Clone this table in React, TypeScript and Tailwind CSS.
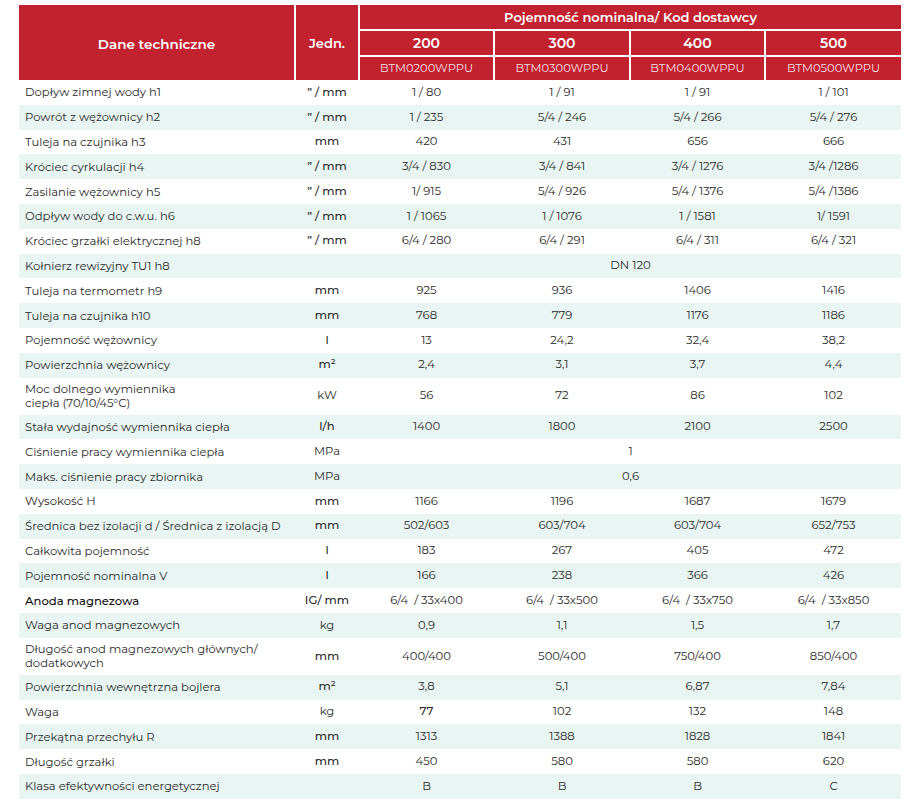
type Row = {
  label: React.ReactNode
  unit: string
  unitBold?: boolean
  values: string[]
  span?: boolean
  tall?: boolean
  labelBold?: boolean
  boldValue?: number
}

const Q = "\u201D / mm"

const rows: Row[] = [
  { label: "Dopływ zimnej wody h1", unit: Q, unitBold: true, values: ["1 / 80", "1 / 91", "1 / 91", "1 / 101"] },
  { label: "Powrót z wężownicy h2", unit: Q, unitBold: true, values: ["1 / 235", "5/4 / 246", "5/4 / 266", "5/4 / 276"] },
  { label: "Tuleja na czujnika h3", unit: "mm", unitBold: true, values: ["420", "431", "656", "666"] },
  { label: "Króciec cyrkulacji h4", unit: Q, unitBold: true, values: ["3/4 / 830", "3/4 / 841", "3/4 / 1276", "3/4 /1286"] },
  { label: "Zasilanie wężownicy h5", unit: Q, unitBold: true, values: ["1/ 915", "5/4 / 926", "5/4 / 1376", "5/4 /1386"] },
  { label: "Odpływ wody do c.w.u. h6", unit: Q, unitBold: true, values: ["1 / 1065", "1 / 1076", "1 / 1581", "1/ 1591"] },
  { label: "Króciec grzałki elektrycznej  h8", unit: Q, unitBold: true, values: ["6/4 / 280", "6/4 / 291", "6/4 / 311", "6/4 / 321"] },
  { label: "Kołnierz rewizyjny TU1 h8", unit: "", values: ["DN 120"], span: true },
  { label: "Tuleja na termometr h9", unit: "mm", unitBold: true, values: ["925", "936", "1406", "1416"] },
  { label: "Tuleja na czujnika h10", unit: "mm", unitBold: true, values: ["768", "779", "1176", "1186"] },
  { label: "Pojemność wężownicy", unit: "l", unitBold: true, values: ["13", "24,2", "32,4", "38,2"] },
  { label: "Powierzchnia wężownicy", unit: "m²", unitBold: true, values: ["2,4", "3,1", "3,7", "4,4"] },
  {
    label: (
      <>
        Moc dolnego wymiennika
        <br />
        ciepła (70/10/45°C)
      </>
    ),
    unit: "kW",
    values: ["56", "72", "86", "102"],
    tall: true,
  },
  { label: "Stała wydajność wymiennika ciepła", unit: "l/h", unitBold: true, values: ["1400", "1800", "2100", "2500"] },
  { label: "Ciśnienie pracy wymiennika ciepła", unit: "MPa", values: ["1"], span: true },
  { label: "Maks. ciśnienie pracy zbiornika", unit: "MPa", values: ["0,6"], span: true },
  { label: "Wysokość H", unit: "mm", unitBold: true, values: ["1166", "1196", "1687", "1679"] },
  { label: "Średnica bez izolacji d / Średnica z izolacją D", unit: "mm", unitBold: true, values: ["502/603", "603/704", "603/704", "652/753"] },
  { label: "Całkowita pojemność", unit: "l", unitBold: true, values: ["183", "267", "405", "472"] },
  { label: "Pojemność nominalna V", unit: "l", unitBold: true, values: ["166", "238", "366", "426"] },
  { label: "Anoda magnezowa", labelBold: true, unit: "IG/ mm", unitBold: true, values: ["6/4  / 33x400", "6/4  / 33x500", "6/4  / 33x750", "6/4  / 33x850"] },
  { label: "Waga anod magnezowych", unit: "kg", values: ["0,9", "1,1", "1,5", "1,7"] },
  {
    label: (
      <>
        Długość anod magnezowych głównych/
        <br />
        dodatkowych
      </>
    ),
    unit: "mm",
    unitBold: true,
    values: ["400/400", "500/400", "750/400", "850/400"],
    tall: true,
  },
  { label: "Powierzchnia wewnętrzna bojlera", unit: "m²", unitBold: true, values: ["3,8", "5,1", "6,87", "7,84"] },
  { label: "Waga", unit: "kg", values: ["77", "102", "132", "148"], boldValue: 0 },
  { label: "Przekątna przechyłu R", unit: "mm", unitBold: true, values: ["1313", "1388", "1828", "1841"] },
  { label: "Długość grzałki", unit: "mm", unitBold: true, values: ["450", "580", "580", "620"] },
  { label: "Klasa efektywności energetycznej", unit: "", values: ["B", "B", "B", "C"] },
]

const cols = "grid grid-cols-[275px_62px_133px_134px_133px_135px] gap-x-[2px]"

export default function App() {
  return (
    <div className="min-h-screen bg-white pt-[5px] pl-[19px] font-['Montserrat','Inter','Open_Sans',sans-serif] text-[#2a2a2a]">
      <div className="w-[882px]">
        {/* Header */}
        <div className={`${cols} grid-rows-[24px_24px_23px] gap-y-[2px] text-white`}>
          <div className="row-span-3 flex items-center justify-center bg-[#c2212f] pt-[3px] text-[13.5px] font-semibold">
            Dane techniczne
          </div>
          <div className="row-span-3 flex items-center justify-center bg-[#c2212f] pt-[3px] text-[13px] font-semibold">
            Jedn.
          </div>
          <div className="col-span-4 flex items-center justify-center bg-[#c2212f] pt-[1px] text-[13px] font-semibold">
            Pojemność nominalna/ Kod dostawcy
          </div>
          {["200", "300", "400", "500"].map((v) => (
            <div key={v} className="flex items-center justify-center bg-[#c2212f] pt-[1px] text-[14px] font-semibold">
              {v}
            </div>
          ))}
          {["BTM0200WPPU", "BTM0300WPPU", "BTM0400WPPU", "BTM0500WPPU"].map((v) => (
            <div key={v} className="flex items-center justify-center bg-[#c2212f] pt-[1px] text-[11.5px] text-[#f6dfe1]">
              {v}
            </div>
          ))}
        </div>

        {/* Body */}
        <div className="text-[11.6px]">
          {rows.map((row, i) => (
            <div
              key={i}
              className={`${cols} items-center ${row.tall ? "h-[37px]" : "h-[24.8px]"} ${
                i % 2 === 1 ? "bg-[#e9f5f2]" : "bg-white"
              }`}
            >
              <div className={`pl-[6px] leading-[14px] ${row.labelBold ? "font-medium text-[#111]" : ""}`}>
                {row.label}
              </div>
              <div className={`text-center ${row.unitBold ? "font-medium" : ""}`}>{row.unit}</div>
              {row.span ? (
                <div className="col-span-4 text-center">{row.values[0]}</div>
              ) : (
                row.values.map((v, j) => (
                  <div key={j} className={`text-center whitespace-pre ${row.boldValue === j ? "font-medium" : ""}`}>
                    {v}
                  </div>
                ))
              )}
            </div>
          ))}
        </div>
      </div>
    </div>
  )
}
